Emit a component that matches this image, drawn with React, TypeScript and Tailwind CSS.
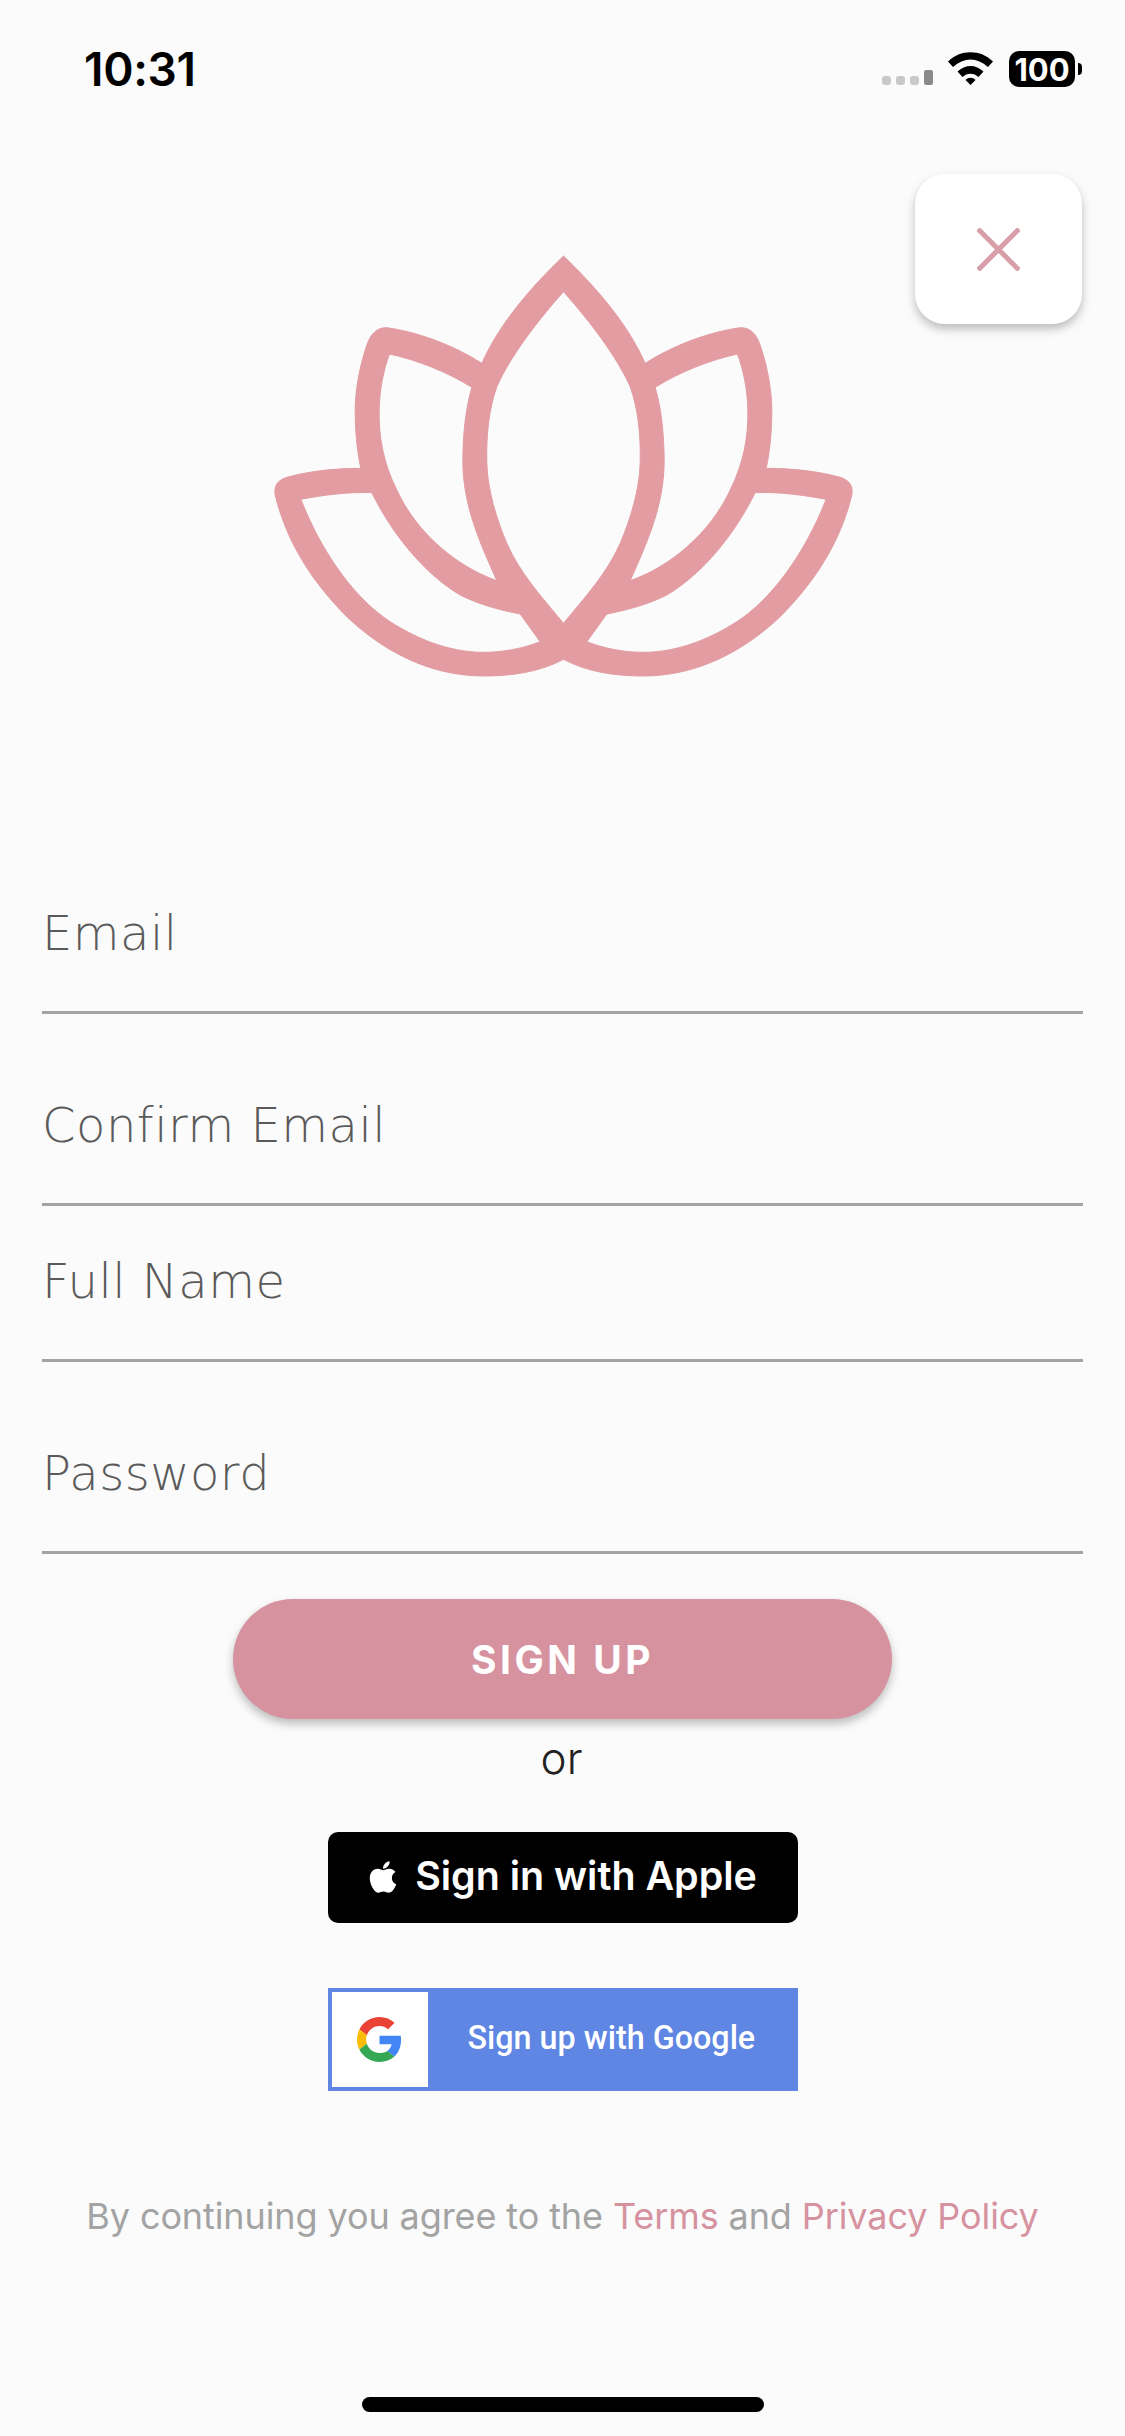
import { FaApple } from "react-icons/fa";

const fields = [
  { label: "Email", height: "h-[192px]" },
  { label: "Confirm Email", height: "h-[192px]" },
  { label: "Full Name", height: "h-[156px]" },
  { label: "Password", height: "h-[192px]" },
];

function StatusBar() {
  return (
    <div className="flex h-[120px] items-start justify-between pl-[84px] pr-[43px] pt-[43px]">
      <span className="font-['Inter',sans-serif] text-[46px] font-semibold leading-[52px] tracking-[-0.3px] text-black">
        10:31
      </span>
      <div className="flex items-start pt-[8px]">
        <div className="mr-[15px] mt-[19px] flex items-end gap-[5px]">
          <span className="h-[9px] w-[9px] rounded-[3px] bg-[#c9c9c9]" />
          <span className="h-[9px] w-[9px] rounded-[3px] bg-[#c9c9c9]" />
          <span className="h-[9px] w-[9px] rounded-[3px] bg-[#c9c9c9]" />
          <span className="h-[15px] w-[9px] rounded-[2px] bg-[#8a8a8a]" />
        </div>
        <svg width="45" height="33" viewBox="0 0 45 33" className="mr-[16px] mt-[1px]">
          <path d="M0 9.5C12-3 33-3 45 9.5L40 15C29 5 16 5 5 15Z" />
          <path d="M9.5 19.5C17 12 28 12 35.5 19.5L30.5 25C26 20.5 19 20.5 14.5 25Z" />
          <path d="M17.5 28C20 25 25 25 27.5 28L22.5 33Z" />
        </svg>
        <div className="flex h-[36px] w-[66px] items-center justify-center rounded-[10px] bg-black font-['Inter',sans-serif] text-[31px] font-bold leading-none text-white">
          100
        </div>
        <span className="ml-[3px] mt-[12px] h-[12px] w-[4px] rounded-r-[4px] bg-black" />
      </div>
    </div>
  );
}

function Lotus() {
  return (
    <svg width="587" height="430" viewBox="0 0 1760 1290" className="ml-[270px] mt-[130px] block">
      <path
        fill="#e29ca2"
        fillRule="evenodd"
        stroke="#e29ca2"
        strokeWidth="3"
        strokeLinejoin="round"
        d="M880 18C790 105 690 215 635 340C550 285 440 245 350 233C322 232 303 250 292 280C270 340 255 420 255 480C255 550 262 610 272 655C190 655 110 665 50 682C25 690 10 705 15 735C50 880 130 1000 230 1100C330 1195 470 1278 640 1278C730 1278 810 1265 880 1228C950 1265 1030 1278 1120 1278C1290 1278 1430 1195 1530 1100C1630 1000 1710 880 1745 735C1750 705 1735 690 1710 682C1650 665 1570 655 1488 655C1498 610 1505 550 1505 480C1505 420 1490 340 1468 280C1457 250 1438 232 1410 233C1320 245 1210 285 1125 340C1070 215 970 105 880 18Z
        M880 125C800 215 720 320 680 410C655 480 648 560 650 640C652 720 680 810 710 880C750 970 810 1035 880 1120C950 1035 1010 970 1050 880C1080 810 1108 720 1110 640C1112 560 1105 480 1080 410C1040 320 960 215 880 125Z
        M358 312C440 330 530 365 605 412C585 480 578 560 578 640C580 770 630 880 680 992C560 950 440 850 380 720C340 640 325 560 327 480C328 420 340 360 358 312Z
        M1402 312C1320 330 1230 365 1155 412C1175 480 1182 560 1182 640C1180 770 1130 880 1080 992C1200 950 1320 850 1380 720C1420 640 1435 560 1433 480C1432 420 1420 360 1402 312Z
        M92 748C160 735 235 725 305 728C365 850 460 970 570 1035C630 1065 690 1080 750 1092L810 1175C760 1195 700 1207 640 1207C530 1207 430 1160 360 1115C260 1050 160 920 92 748Z
        M1668 748C1600 735 1525 725 1455 728C1395 850 1300 970 1190 1035C1130 1065 1070 1080 1010 1092L950 1175C1000 1195 1060 1207 1120 1207C1230 1207 1330 1160 1400 1115C1500 1050 1600 920 1668 748Z"
      />
    </svg>
  );
}

function GoogleG() {
  return (
    <svg width="45" height="45" viewBox="0 0 48 48">
      <path fill="#EA4335" d="M24 9.5c3.54 0 6.71 1.22 9.21 3.6l6.85-6.85C35.9 2.38 30.47 0 24 0 14.62 0 6.51 5.38 2.56 13.22l7.98 6.19C12.43 13.72 17.74 9.5 24 9.5z" />
      <path fill="#4285F4" d="M46.98 24.55c0-1.57-.15-3.09-.38-4.55H24v9.02h12.94c-.58 2.96-2.26 5.48-4.78 7.18l7.73 6c4.51-4.18 7.09-10.36 7.09-17.65z" />
      <path fill="#FBBC05" d="M10.53 28.59c-.48-1.45-.76-2.99-.76-4.59s.27-3.14.76-4.59l-7.98-6.19C.92 16.46 0 20.12 0 24c0 3.88.92 7.54 2.56 10.78l7.97-6.19z" />
      <path fill="#34A853" d="M24 48c6.48 0 11.93-2.13 15.89-5.81l-7.73-6c-2.15 1.45-4.92 2.3-8.16 2.3-6.26 0-11.57-4.22-13.47-9.91l-7.98 6.19C6.51 42.62 14.62 48 24 48z" />
    </svg>
  );
}

export default function App() {
  return (
    <div className="relative flex h-[2436px] w-[1125px] flex-col overflow-hidden bg-[#fbfbfb]">
      <StatusBar />

      {/* close button floats over the logo area */}
      <button className="absolute left-[915px] top-[174px] flex h-[150px] w-[167px] items-center justify-center rounded-[30px] bg-white shadow-[0_5px_10px_rgba(0,0,0,0.25)]">
        <svg width="43" height="43" viewBox="0 0 43 43" stroke="#d89faa" strokeWidth="5">
          <path d="M1 1L42 42M42 1L1 42" />
        </svg>
      </button>

      <Lotus />

      <div className="mt-[142px] flex flex-col px-[42px]">
        {fields.map((field) => (
          <div
            key={field.label}
            className={`${field.height} flex items-end border-b-[3px] border-[#a3a3a3] pb-[54px]`}
          >
            <span className="font-['DejaVu_Sans',sans-serif] text-[48px] font-extralight leading-[48px] tracking-[0.5px] text-[#5a5a5a]">
              {field.label}
            </span>
          </div>
        ))}
      </div>

      <div className="mt-[45px] flex flex-col items-center">
        <button className="flex h-[120px] w-[659px] items-center justify-center rounded-full bg-[#d6929f] pt-[2px] font-['Inter',sans-serif] text-[39px] font-bold tracking-[3.5px] text-white shadow-[0_5px_10px_rgba(0,0,0,0.25)]">
          SIGN UP
        </button>
        <div className="flex h-[84px] items-center pb-[6px] pr-[2px] font-['Inter',sans-serif] text-[44px] font-light text-[#222222]">
          or
        </div>
        <button className="mt-[29px] flex h-[91px] w-[470px] items-center justify-center gap-[14px] rounded-[10px] bg-black pb-[2px] pr-[3px] font-['Inter',sans-serif] text-[39.4px] font-semibold text-white">
          <FaApple size={36} />
          <span>Sign in with Apple</span>
        </button>
        <button className="mt-[65px] flex h-[103px] w-[470px] items-center bg-[#5f86e3] pl-[4px]">
          <span className="flex h-[95px] w-[96px] items-center justify-center bg-white">
            <GoogleG />
          </span>
          <span className="mb-[3px] ml-[40px] font-['Roboto',sans-serif] text-[32.3px] font-medium text-white">
            Sign up with Google
          </span>
        </button>
      </div>

      <p className="mt-[103px] text-center font-['Inter',sans-serif] text-[36px] leading-[44px] tracking-[-0.1px] text-[#a3a3a3]">
        By continuing you agree to the <span className="text-[#d6929f]">Terms</span> and{" "}
        <span className="text-[#d6929f]">Privacy Policy</span>
      </p>

      <div className="mb-[24px] mt-auto flex justify-center">
        <div className="h-[15px] w-[402px] rounded-full bg-black" />
      </div>
    </div>
  );
}
